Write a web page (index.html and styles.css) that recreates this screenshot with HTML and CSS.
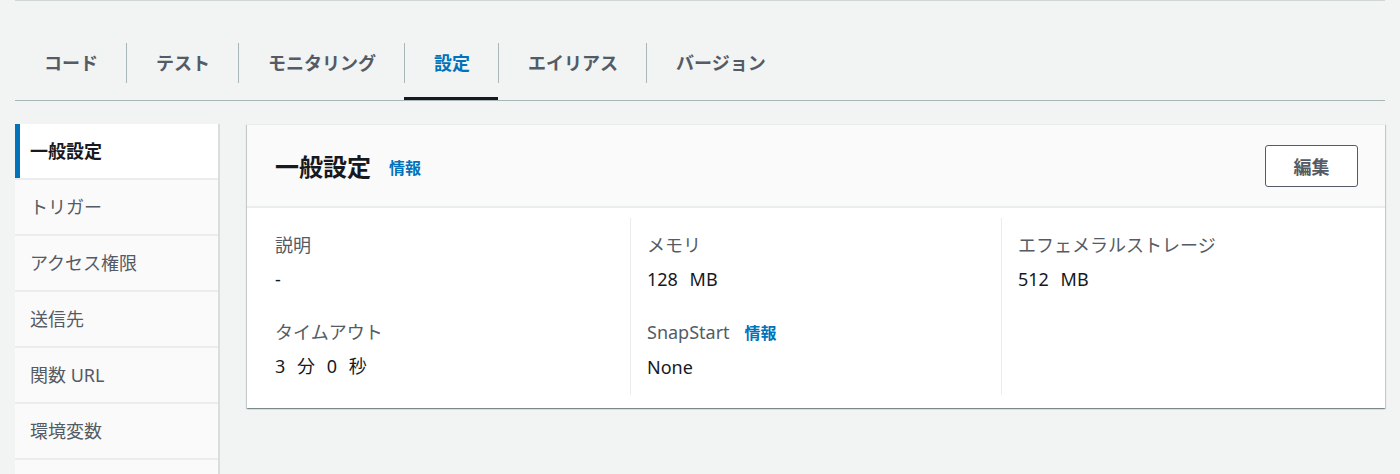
FILE: index.html
```html
<!DOCTYPE html>
<html lang="ja">
<head>
  <meta charset="UTF-8">
  <meta name="viewport" content="width=device-width, initial-scale=1.0">
  <title>設定</title>
  <link rel="stylesheet" href="styles.css">
</head>
<body>
  <div class="page">
    <div class="top-edge"></div>

    <div class="tabs">
      <div class="tab"><span>コード</span></div>
      <div class="tab"><span>テスト</span></div>
      <div class="tab"><span>モニタリング</span></div>
      <div class="tab active"><span>設定</span></div>
      <div class="tab"><span>エイリアス</span></div>
      <div class="tab"><span>バージョン</span></div>
    </div>

    <div class="content">
      <div class="side">
        <div class="side-item active">一般設定</div>
        <div class="side-item">トリガー</div>
        <div class="side-item">アクセス権限</div>
        <div class="side-item">送信先</div>
        <div class="side-item">関数 URL</div>
        <div class="side-item">環境変数</div>
        <div class="side-item"></div>
      </div>

      <div class="panel">
        <div class="panel-header">
          <div class="panel-title">
            <h2>一般設定</h2>
            <a class="info" href="#">情報</a>
          </div>
          <button class="btn">編集</button>
        </div>
        <div class="panel-body">
          <div class="column">
            <div class="item">
              <div class="label">説明</div>
              <div class="value">-</div>
            </div>
            <div class="item">
              <div class="label">タイムアウト</div>
              <div class="value">3 分 0 秒</div>
            </div>
          </div>
          <div class="column">
            <div class="item">
              <div class="label">メモリ</div>
              <div class="value">128 MB</div>
            </div>
            <div class="item">
              <div class="label">SnapStart<a class="info" href="#">情報</a></div>
              <div class="value">None</div>
            </div>
          </div>
          <div class="column">
            <div class="item">
              <div class="label">エフェメラルストレージ</div>
              <div class="value">512 MB</div>
            </div>
          </div>
        </div>
      </div>
    </div>
  </div>
</body>
</html>
```

FILE: styles.css
```css
body {
  margin: 0;
  background: #f2f3f3;
  font-family: "Noto Sans", "Noto Sans CJK JP", sans-serif;
  font-size: 18px;
  color: #16191f;
}
.page {
  padding: 0 15px;
}
.top-edge {
  height: 1px;
  background: #d1d6d6;
}

/* tabs */
.tabs {
  display: flex;
  margin-top: 25px;
  border-bottom: 1px solid #aab7b8;
}
.tab {
  padding: 17px 0 14px;
  border-bottom: 3px solid transparent;
  font-weight: 700;
  color: #545b64;
}
.tab span {
  display: block;
  line-height: 40px;
  padding: 0 28px 0 29px;
  border-left: 1px solid #aab7b8;
}
.tab:first-child span {
  border-left: none;
}
.tab.active {
  border-bottom-color: #16191f;
  color: #0073bb;
}

/* layout */
.content {
  display: flex;
  align-items: flex-start;
  gap: 27px;
  margin-top: 23px;
}

/* side navigation */
.side {
  width: 203px;
  flex-shrink: 0;
  display: flex;
  flex-direction: column;
  gap: 2px;
  background: #eaeded;
  border-right: 2px solid #d9dddd;
}
.side-item {
  height: 54px;
  line-height: 54px;
  padding-left: 15px;
  background: #fafafa;
  color: #545b64;
}
.side-item.active {
  background: #fff;
  color: #16191f;
  font-weight: 700;
  box-shadow: inset 5px 0 0 #0073bb;
}

/* panel */
.panel {
  flex: 1;
  background: #fff;
  border-top: 1px solid #eaeded;
  box-shadow: 0 1px 1px 0 rgba(0, 28, 36, 0.3), 1px 1px 1px 0 rgba(0, 28, 36, 0.15), -1px 1px 1px 0 rgba(0, 28, 36, 0.15);
}
.panel-header {
  height: 81px;
  display: flex;
  align-items: center;
  justify-content: space-between;
  padding: 0 27px 0 28px;
  background: #fafafa;
  border-bottom: 2px solid #eaeded;
}
.panel-title {
  display: flex;
  align-items: center;
}
.panel-title h2 {
  margin: 0;
  font-size: 24px;
  font-weight: 700;
  color: #16191f;
}
.info {
  color: #0073bb;
  font-size: 16px;
  font-weight: 700;
  text-decoration: none;
  margin-left: 15px;
}
.panel-title .info {
  margin-left: 18px;
  margin-top: 2px;
}
.btn {
  width: 93px;
  height: 42px;
  background: #fff;
  border: 1px solid #545b64;
  border-radius: 3px;
  font-family: inherit;
  font-size: 18px;
  font-weight: 700;
  color: #545b64;
  cursor: pointer;
}

.panel-body {
  display: grid;
  grid-template-columns: repeat(3, 1fr);
  padding: 10px 13px 13px 12px;
}
.column {
  padding: 15px 0 16px 16px;
}
.column + .column {
  border-left: 1px solid #eaeded;
}
.item + .item {
  margin-top: 29px;
}
.label {
  line-height: 24px;
  color: #545b64;
}
.value {
  line-height: 24px;
  margin-top: 10px;
  color: #16191f;
  word-spacing: 7px;
}
```
